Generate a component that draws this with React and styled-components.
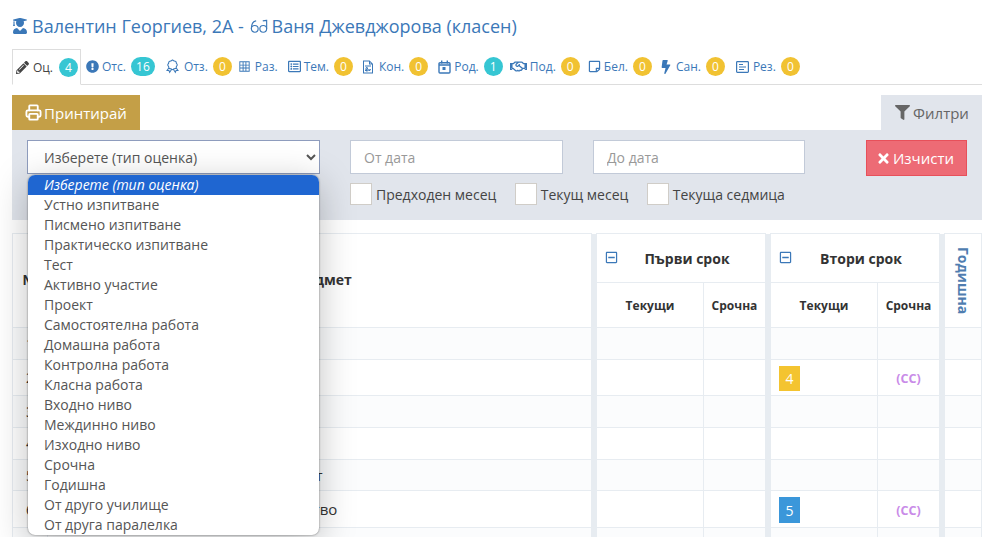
import React from 'react';
import styled, { createGlobalStyle } from 'styled-components';
import {
  FaUserGraduate, FaPencilAlt, FaExclamationCircle, FaFilter, FaTimes, FaBolt, FaRegMinusSquare,
  FaRegListAlt, FaRegHandshake, FaRegStickyNote,
} from 'react-icons/fa';
import { LiaAwardSolid, LiaTableSolid, LiaFileSignatureSolid } from 'react-icons/lia';
import { LuPrinter } from 'react-icons/lu';

const GlobalStyle = createGlobalStyle`
  html, body {
    margin: 0;
    height: 100%;
    overflow: hidden;
    background: #fff;
    font-family: "Open Sans", sans-serif;
    color: #333;
  }
`;

const Page = styled.div`
  padding: 13px 11px 0 12px;
`;

const Title = styled.h1`
  display: flex;
  align-items: center;
  gap: 2px;
  margin: 0;
  height: 26px;
  font-size: 18px;
  font-weight: 400;
  color: #3b78b8;
  white-space: pre;
  svg { flex: none; }
`;

const UserIcon = styled(FaUserGraduate)`
  margin-right: 2px;
`;

const Glasses = styled.svg`
  margin: 0 2px 0 -1px;
`;

const Tabs = styled.div`
  display: flex;
  align-items: flex-start;
  box-sizing: border-box;
  height: 36px;
  margin-top: 10px;
  border-bottom: 1px solid #ddd;
`;

const Tab = styled.div`
  display: flex;
  align-items: center;
  gap: 3px;
  height: 35px;
  box-sizing: border-box;
  padding: 0 4px;
  margin-right: ${p => p.$trim ? -p.$trim : 0}px;
  font-size: 12px;
  color: #3b78b8;
  border: 1px solid transparent;
  svg { flex: none; }
`;

const ActiveTab = styled(Tab)`
  gap: 4px;
  height: 36px;
  padding: 0 2px 0 3px;
  color: #444;
  background: #fff;
  border-color: #ddd;
  border-bottom-color: #fff;
`;

const Badge = styled.span`
  display: inline-flex;
  align-items: center;
  justify-content: center;
  height: 19px;
  min-width: ${p => p.$wide ? 24 : 19}px;
  margin-left: 2px;
  border-radius: 10px;
  font-size: 12px;
  color: #fff;
  background: ${p => p.$tone === 'info' ? '#36c6d3' : '#f1c232'};
`;

const ActionBar = styled.div`
  display: flex;
  justify-content: space-between;
  margin-top: 10px;
  height: 35px;
`;

const PrintButton = styled.button`
  display: flex;
  align-items: center;
  justify-content: center;
  gap: 2px;
  width: 128px;
  padding: 0;
  border: 0;
  background: #c49f47;
  color: #fff;
  font: 400 15px "Open Sans", sans-serif;
`;

const FilterTab = styled.div`
  display: flex;
  align-items: center;
  justify-content: center;
  gap: 3px;
  width: 101px;
  padding-left: 1px;
  box-sizing: border-box;
  background: #e1e5ec;
  color: #666;
  font-size: 15px;
`;

const FilterPanel = styled.div`
  display: flex;
  height: 90px;
  box-sizing: border-box;
  padding: 10px 15px 0;
  background: #e1e5ec;
`;

const SelectBox = styled.div`
  position: relative;
  width: 293px;
  margin-right: 30px;
`;

const TypeSelect = styled.select`
  width: 100%;
  height: 34px;
  padding: 0 0 0 12px;
  border: 1px solid #8e9cbd;
  border-radius: 0;
  background: #fff;
  color: #555;
  font: 400 14px "Open Sans", sans-serif;
  outline: none;
`;

const OptionList = styled.ul`
  position: absolute;
  z-index: 5;
  top: 35px;
  left: 1px;
  width: 291px;
  height: 360px;
  margin: 0;
  padding: 0;
  list-style: none;
  overflow: hidden;
  background: #fff;
  border-radius: 7px;
  box-shadow: 0 0 2px rgba(0, 0, 0, .55), 0 8px 36px rgba(0, 0, 0, .25);
`;

const OptionItem = styled.li`
  height: 20px;
  line-height: 20px;
  padding-left: 16px;
  font-size: 14px;
  color: ${p => p.$selected ? '#fff' : '#555'};
  font-style: ${p => p.$selected ? 'italic' : 'normal'};
  background: ${p => p.$selected ? '#1f66d1' : 'transparent'};
`;

const DateFields = styled.div`
  display: grid;
  grid-template-columns: 213px 212px;
  grid-auto-rows: min-content;
  column-gap: 30px;
  row-gap: 9px;
  width: 455px;
`;

const DateInput = styled.input`
  height: 34px;
  box-sizing: border-box;
  padding: 0 13px;
  border: 1px solid #c2cad8;
  background: #fff;
  font: 400 14px "Open Sans", sans-serif;
  outline: none;
  &::placeholder { color: #999; opacity: 1; }
`;

const QuickChecks = styled.div`
  grid-column: 1 / -1;
  display: flex;
  gap: 18.5px;
`;

const QuickCheck = styled.label`
  display: flex;
  align-items: center;
  gap: 4px;
  height: 22px;
  font-size: 14px;
  color: #444;
`;

const CheckBox = styled.span`
  width: 20px;
  height: 20px;
  border: 1px solid #d0cdc8;
  background: #fff;
`;

const ClearButton = styled.button`
  display: flex;
  align-items: center;
  justify-content: center;
  gap: 2px;
  box-sizing: border-box;
  width: 101px;
  height: 36px;
  margin-left: 61px;
  padding: 0 3px 0 0;
  border: 1px solid #e7505a;
  background: #ed6b75;
  color: #fff;
  font: 400 15px "Open Sans", sans-serif;
`;

const GradesTable = styled.table`
  width: 970px;
  margin-top: 13px;
  table-layout: fixed;
  border-collapse: collapse;
  font-size: 14px;
  th, td { border: 1px solid #e7ecf1; padding: 0; }
  th { font-weight: 700; color: #333; }
`;

const TermHead = styled.th`
  position: relative;
  height: 48px;
  padding-left: 12px !important;
  font-size: 14px;
`;

const Collapse = styled.span`
  position: absolute;
  left: 8px;
  top: 17px;
  display: flex;
  color: #3b78b8;
`;

const SubHead = styled.th`
  height: 44px;
  font-size: 12px;
`;

const MainHead = styled.th`
  padding-bottom: 2px !important;
  font-size: 14px;
`;

const YearHead = styled.th`
  font-size: 14px;
  color: #4f7db0 !important;
`;

const VerticalLabel = styled.span`
  display: block;
  writing-mode: vertical-rl;
  margin: 0 auto;
  line-height: 1;
`;

const Row = styled.tr`
  height: ${p => p.$h}px;
  background: ${p => p.$odd ? '#fbfcfd' : '#fff'};
`;

const NumCell = styled.td`
  text-align: center;
`;

const SubjectCell = styled.td`
  padding-left: ${p => p.$inset}px !important;
  padding-top: ${p => p.$top ? 3 : 0}px !important;
  vertical-align: ${p => p.$top ? 'top' : 'middle'};
  font-size: 15px;
  white-space: nowrap;
  overflow: hidden;
`;

const Divider = styled.col`
  width: 5px;
`;

const GapCell = styled.td`
  background: #e7ecf1;
  border: 0 !important;
`;

const GapHead = styled.th`
  background: #e7ecf1;
  border: 0 !important;
`;

const GradeCell = styled.td`
  padding-left: 8px !important;
`;

const Grade = styled.span`
  display: flex;
  align-items: center;
  justify-content: center;
  width: 21px;
  height: ${p => p.$h}px;
  margin-top: 2px;
  font-size: 14px;
  color: #fff;
  background: ${p => p.$bg};
`;

const Mark = styled.td`
  padding-top: 2px !important;
  text-align: center;
  font-size: 12.5px;
  font-weight: 700;
  color: #c98be8;
`;

const GlassesIcon = () => (
  <Glasses width="18" height="17" viewBox="0 0 19 18" fill="none" stroke="currentColor" strokeWidth="1.2">
    <circle cx="5" cy="11.5" r="3.6" />
    <circle cx="14" cy="11.5" r="3.6" />
    <path d="M1.4 11.5C1.4 7 3 3.5 6.5 3" />
    <path d="M17.6 11.5V2.5C17.6 2.5 15.5 2.5 13.5 3" />
  </Glasses>
);

const CalendarIcon = () => (
  <svg width="13" height="14" viewBox="0 0 13 14" fill="none" stroke="currentColor" strokeWidth="1.4">
    <rect x="1" y="2.7" width="11" height="10.3" rx="1" />
    <path d="M3.7 0.5v3M9.3 0.5v3M1 5h11" />
    <rect x="4.5" y="7" width="3" height="3" fill="currentColor" stroke="none" />
  </svg>
);

const ResultIcon = () => (
  <svg width="15" height="14" viewBox="0 0 15 14" fill="none" stroke="currentColor" strokeWidth="1.2">
    <rect x="1.6" y="1.6" width="11.8" height="10.8" rx="0.8" />
    <path d="M4 4.5h4M4 7h7M4 9.5h5" />
  </svg>
);

const options = [
  'Устно изпитване', 'Писмено изпитване', 'Практическо изпитване', 'Тест', 'Активно участие',
  'Проект', 'Самостоятелна работа', 'Домашна работа', 'Контролна работа', 'Класна работа',
  'Входно ниво', 'Междинно ниво', 'Изходно ниво', 'Срочна', 'Годишна', 'От друго училище',
  'От друга паралелка',
];

const tabs = [
  { icon: <FaExclamationCircle size={13} />, label: 'Отс.', count: 16, tone: 'info', wide: true, trim: 1 },
  { icon: <LiaAwardSolid size={17} />, label: 'Отз.', count: 0, trim: 5 },
  { icon: <LiaTableSolid size={15} />, label: 'Раз.' },
  { icon: <FaRegListAlt size={13} />, label: 'Тем.', count: 0, trim: 3 },
  { icon: <LiaFileSignatureSolid size={16} />, label: 'Кон.', count: 0 },
  { icon: <CalendarIcon />, label: 'Род.', count: 1, tone: 'info', trim: 3 },
  { icon: <FaRegHandshake size={17} />, label: 'Под.', count: 0, trim: 2 },
  { icon: <FaRegStickyNote size={13} />, label: 'Бел.', count: 0, trim: 3 },
  { icon: <FaBolt size={14} />, label: 'Сан.', count: 0 },
  { icon: <ResultIcon />, label: 'Рез.', count: 0 },
];

const rows = [
  { h: 32, subject: 'Български език', inset: 60 },
  { h: 36, subject: 'Математика', inset: 60, grade: { value: 4, bg: '#f4c430', h: 25 } },
  { h: 32, subject: 'Английски език', inset: 60 },
  { h: 32, subject: 'Музика', inset: 60 },
  { h: 31, subject: 'Физическо възпитание и спорт', inset: 44 },
  { h: 37, subject: 'Изобразително изкуство', inset: 108, grade: { value: 5, bg: '#3b97da', h: 26 } },
  { h: 32, subject: 'Технологии и предприемачество', inset: 8, top: true },
];

const App = () => {
  return (
    <Page>
      <GlobalStyle />
      <Title>
        <UserIcon size={16} color="#3b78b8" />
        <span>Валентин Георгиев, 2А - </span>
        <GlassesIcon />
        <span>Ваня Джевджорова (класен)</span>
      </Title>

      <Tabs>
        <ActiveTab>
          <FaPencilAlt size={13} color="#444" />
          Оц.
          <Badge $tone="info">4</Badge>
        </ActiveTab>
        {tabs.map(t => (
          <Tab key={t.label} $trim={t.trim}>
            {t.icon}
            {t.label}
            {t.count !== undefined && <Badge $tone={t.tone} $wide={t.wide}>{t.count}</Badge>}
          </Tab>
        ))}
      </Tabs>

      <ActionBar>
        <PrintButton><LuPrinter size={17} strokeWidth={2.6} />Принтирай</PrintButton>
        <FilterTab><FaFilter size={15} />Филтри</FilterTab>
      </ActionBar>

      <FilterPanel>
        <SelectBox>
          <TypeSelect defaultValue="">
            <option value="">Изберете (тип оценка)</option>
          </TypeSelect>
          <OptionList>
            <OptionItem $selected>Изберете (тип оценка)</OptionItem>
            {options.map(o => <OptionItem key={o}>{o}</OptionItem>)}
          </OptionList>
        </SelectBox>
        <DateFields>
          <DateInput placeholder="От дата" />
          <DateInput placeholder="До дата" />
          <QuickChecks>
            <QuickCheck><CheckBox />Предходен месец</QuickCheck>
            <QuickCheck><CheckBox />Текущ месец</QuickCheck>
            <QuickCheck><CheckBox />Текуща седмица</QuickCheck>
          </QuickChecks>
        </DateFields>
        <ClearButton><FaTimes size={15} />Изчисти</ClearButton>
      </FilterPanel>

      <GradesTable>
        <colgroup>
          <col style={{ width: 35 }} />
          <col />
          <Divider />
          <col style={{ width: 107 }} />
          <col style={{ width: 62 }} />
          <Divider />
          <col style={{ width: 107 }} />
          <col style={{ width: 62 }} />
          <Divider />
          <col style={{ width: 37 }} />
        </colgroup>
        <thead>
          <tr>
            <MainHead rowSpan={2}>№</MainHead>
            <MainHead rowSpan={2}>Предмет</MainHead>
            <GapHead rowSpan={2} />
            <TermHead colSpan={2}>
              <Collapse><FaRegMinusSquare size={13} /></Collapse>
              Първи срок
            </TermHead>
            <GapHead rowSpan={2} />
            <TermHead colSpan={2}>
              <Collapse><FaRegMinusSquare size={13} /></Collapse>
              Втори срок
            </TermHead>
            <GapHead rowSpan={2} />
            <YearHead rowSpan={2}><VerticalLabel>Годишна</VerticalLabel></YearHead>
          </tr>
          <tr>
            <SubHead>Текущи</SubHead>
            <SubHead>Срочна</SubHead>
            <SubHead>Текущи</SubHead>
            <SubHead>Срочна</SubHead>
          </tr>
        </thead>
        <tbody>
          {rows.map((r, i) => (
            <Row key={r.subject} $h={r.h} $odd={i % 2 === 0}>
              <NumCell>{i + 1}</NumCell>
              <SubjectCell $inset={r.inset} $top={r.top}>{r.subject}</SubjectCell>
              <GapCell />
              <td />
              <td />
              <GapCell />
              <GradeCell>{r.grade && <Grade $bg={r.grade.bg} $h={r.grade.h}>{r.grade.value}</Grade>}</GradeCell>
              {r.grade ? <Mark>(СС)</Mark> : <td />}
              <GapCell />
              <td />
            </Row>
          ))}
        </tbody>
      </GradesTable>
    </Page>
  );
};

export default App;
